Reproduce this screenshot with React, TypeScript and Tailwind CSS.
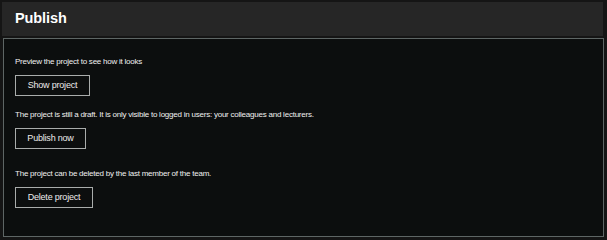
const font = { fontFamily: '"Liberation Sans", Arial, sans-serif' };

function ActionButton({ label, width }: { label: string; width: string }) {
  return (
    <button
      className={`${width} h-[21px] border border-[#a9acab] text-[9px] leading-none tracking-[-0.2px] text-[#ececec] flex items-center justify-center`}
    >
      {label}
    </button>
  );
}

export default function App() {
  return (
    <div className="w-[607px] h-[240px] bg-[#151515] pt-[2px] overflow-hidden" style={font}>
      <div className="mx-[2px] w-[601px] h-[34px] bg-[#262626] flex items-center pl-[13px]">
        <h1 className="text-[14.5px] font-bold text-white tracking-[-0.1px]">Publish</h1>
      </div>

      <div className="mt-[2px] ml-[3px] w-[601px] h-[199px] border border-[#5e6665] bg-[#0c0e0e] pl-[11px] pt-[18px] flex flex-col items-start">
        <p className="text-[8px] leading-[10px] tracking-[-0.23px] text-[#f0f0f0]">
          Preview the project to see how it looks
        </p>
        <div className="mt-[8px]">
          <ActionButton label="Show project" width="w-[75px]" />
        </div>

        <p className="mt-[14px] text-[8px] leading-[10px] tracking-[-0.23px] text-[#f0f0f0]">
          The project is still a draft. It is only visible to logged in users: your colleagues and lecturers.
        </p>
        <div className="mt-[8px]">
          <ActionButton label="Publish now" width="w-[71px]" />
        </div>

        <p className="mt-[20px] text-[8px] leading-[10px] tracking-[-0.23px] text-[#f0f0f0]">
          The project can be deleted by the last member of the team.
        </p>
        <div className="mt-[8px]">
          <ActionButton label="Delete project" width="w-[78px]" />
        </div>
      </div>
    </div>
  );
}
